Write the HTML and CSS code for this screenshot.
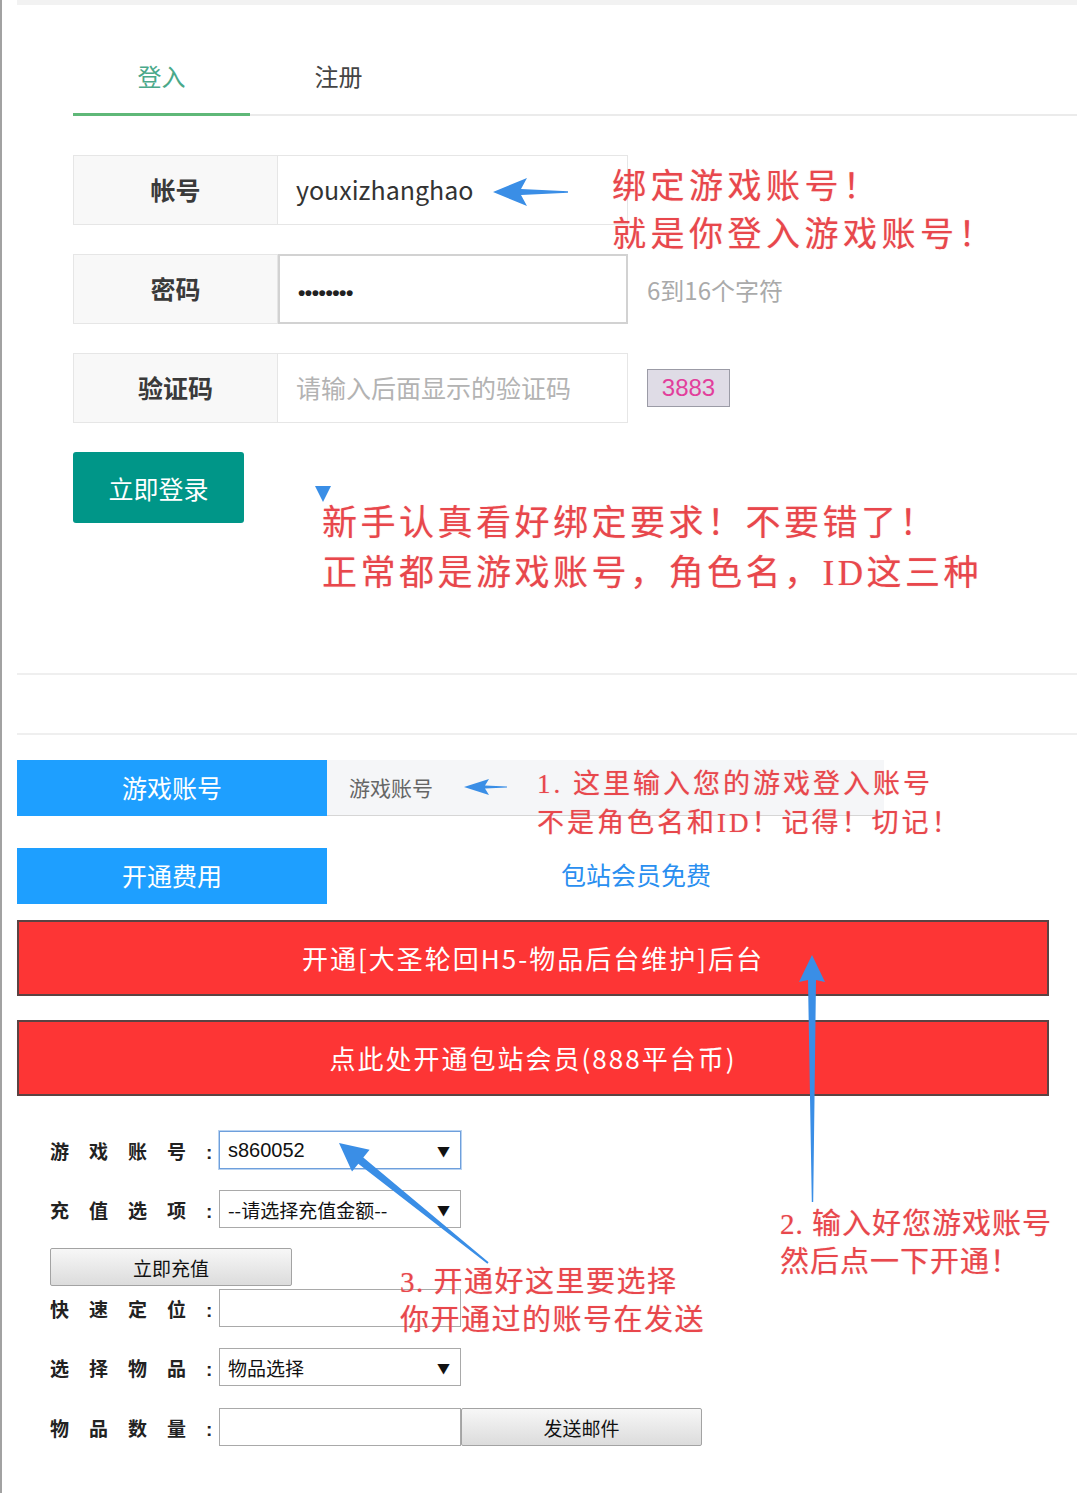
FILE: index.html
```html
<!DOCTYPE html>
<html lang="zh-CN">
<head>
    <meta charset="UTF-8">
    <meta name="viewport" content="width=device-width, initial-scale=1.0">
    <title>绑定游戏账号</title>
    <link rel="stylesheet" href="styles.css">
</head>
<body>

<div class="page">

    <!-- 登录面板 -->
    <div class="login">
        <div class="topbar"></div>
        <ul class="tabs">
            <li class="this">登入</li>
            <li>注册</li>
        </ul>

        <div class="pane">
            <div class="item">
                <label>帐号</label>
                <div class="field">youxizhanghao</div>
            </div>
            <div class="item">
                <label>密码</label>
                <div class="field focus"><span class="dots">••••••••</span></div>
                <span class="hint">6到16个字符</span>
            </div>
            <div class="item">
                <label>验证码</label>
                <div class="field placeholder">请输入后面显示的验证码</div>
                <span class="captcha">3883</span>
            </div>
        </div>

        <button class="btn-login">立即登录</button>
    </div>

    <div class="split"></div>
    <div class="split second"></div>

    <!-- 开通后台 -->
    <div class="open">
        <div class="bar-row">
            <div class="tag">游戏账号</div>
            <div class="cell account">游戏账号</div>
        </div>
        <div class="bar-row fee">
            <div class="tag">开通费用</div>
            <div class="cell free">包站会员免费</div>
        </div>

        <div class="red-bar">开通[大圣轮回H5-物品后台维护]后台</div>
        <div class="red-bar next">点此处开通包站会员(888平台币)</div>

        <div class="mail">
            <div class="frow r1">
                <span class="flabel">游戏账号<i>:</i></span>
                <div class="select focus"><span class="num">s860052</span><b>▼</b></div>
            </div>
            <div class="frow r2">
                <span class="flabel">充值选项<i>:</i></span>
                <div class="select"><span>--请选择充值金额--</span><b>▼</b></div>
            </div>
            <button class="gray-btn pay">立即充值</button>
            <div class="frow r3">
                <span class="flabel">快速定位<i>:</i></span>
                <div class="text-input"></div>
            </div>
            <div class="frow r4">
                <span class="flabel">选择物品<i>:</i></span>
                <div class="select"><span>物品选择</span><b>▼</b></div>
            </div>
            <div class="frow r5">
                <span class="flabel">物品数量<i>:</i></span>
                <div class="text-input"></div>
                <button class="gray-btn send">发送邮件</button>
            </div>
        </div>
    </div>

    <!-- 教程标注 -->
    <div class="note bind">绑定游戏账号！<br>就是你登入游戏账号！</div>
    <div class="note newbie">新手认真看好绑定要求！不要错了！<br>正常都是游戏账号，角色名，ID这三种</div>
    <div class="note step1">1. 这里输入您的游戏登入账号<br>不是角色名和ID！记得！切记！</div>
    <div class="note step2">2. 输入好您游戏账号<br>然后点一下开通！</div>
    <div class="note step3">3. 开通好这里要选择<br>你开通过的账号在发送</div>

    <svg class="arrows" width="1092" height="1493" viewBox="0 0 1092 1493">
        <polygon points="491,192 525,178 519,189 566,191.3 566,192.7 519,195 525,206"/>
        <polygon points="313,486 329,486 321,502"/>
        <polygon points="462,787 487,779 483,785.5 505,786.5 505,787.5 483,788.5 487,795"/>
        <polygon points="810,955 823,982 814,980 811.2,1202 809.8,1202 806,980 797,982"/>
        <polygon points="337,1143 367.6,1149.7 361.3,1157.5 486.6,1262.2 485.4,1263.8 356.3,1163.7 350,1171.5"/>
    </svg>

</div>

</body>
</html>
```

FILE: styles.css
```css
body {
    margin: 0;
    background: #fff;
    font-family: "Noto Sans CJK SC", sans-serif;
    color: #333;
}

.page {
    position: relative;
    width: 1092px;
    min-height: 1493px;
    box-sizing: border-box;
    border-left: 2px solid #a2a2a2;
    padding: 0 15px;
}

/* 登录面板 */
.topbar {
    height: 5px;
    background: #f2f2f2;
}

.tabs {
    list-style: none;
    margin: 0 0 0 56px;
    padding: 0;
    display: flex;
    height: 109px;
    border-bottom: 2px solid #ebebeb;
}

.tabs li {
    width: 177px;
    height: 111px;
    box-sizing: border-box;
    padding-top: 51px;
    line-height: 40px;
    text-align: center;
    font-size: 24px;
    color: #444;
}

.tabs li.this {
    color: #4aa98a;
    border-bottom: 3px solid #5fb878;
}

.pane {
    margin: 39px 0 0 56px;
}

.item {
    display: flex;
    align-items: center;
    height: 70px;
    margin-top: 29px;
}

.item:first-child {
    margin-top: 0;
}

.item label {
    width: 205px;
    height: 70px;
    box-sizing: border-box;
    line-height: 66px;
    text-align: center;
    background: #f8f8f8;
    border: 1px solid #e6e6e6;
    font-size: 25px;
    font-weight: bold;
    color: #3a3a3a;
}

.field {
    width: 350px;
    height: 70px;
    box-sizing: border-box;
    border: 1px solid #e6e6e6;
    border-left: none;
    padding-left: 18px;
    line-height: 66px;
    font-size: 25px;
    color: #333;
}

.field.focus {
    border: 2px solid #d2d2d2;
}

.dots {
    font-family: "Liberation Sans", sans-serif;
    font-size: 21px;
    font-weight: bold;
    letter-spacing: -0.5px;
    color: #222;
}

.field.placeholder {
    color: #b3b3b3;
}

.hint {
    margin-left: 19px;
    font-size: 24px;
    color: #aaa;
}

.captcha {
    margin-left: 19px;
    width: 83px;
    height: 38px;
    box-sizing: border-box;
    border: 1px solid #9b9ba6;
    background: #dfdce6;
    text-align: center;
    line-height: 36px;
    font-family: "Liberation Sans", sans-serif;
    font-size: 24px;
    color: #e23f9c;
}

.btn-login {
    display: block;
    margin: 29px 0 0 56px;
    width: 171px;
    height: 71px;
    border: none;
    border-radius: 3px;
    background: #009688;
    color: #fff;
    font-family: inherit;
    font-size: 25px;
}

.split {
    margin-top: 150px;
    height: 2px;
    background: #efefef;
}

.split.second {
    margin-top: 58px;
}

/* 开通后台 */
.open {
    margin-top: 25px;
}

.bar-row {
    display: flex;
    height: 56px;
}

.bar-row.fee {
    margin-top: 32px;
}

.tag {
    width: 310px;
    line-height: 54px;
    text-align: center;
    background: #1e9fff;
    color: #fff;
    font-size: 25px;
}

.cell.account {
    width: 557px;
    box-sizing: border-box;
    padding-left: 22px;
    line-height: 54px;
    background: #f5f6f8;
    border-bottom: 1px solid #d6d6d6;
    font-size: 21px;
    color: #666;
}

.cell.free {
    width: 618px;
    line-height: 52px;
    text-align: center;
    font-size: 25px;
    color: #2a8ff0;
}

.red-bar {
    margin-top: 16px;
    width: 1032px;
    height: 76px;
    box-sizing: border-box;
    border: 2px solid #5b4343;
    background: #fd3535;
    color: #fff;
    text-align: center;
    line-height: 72px;
    font-size: 26px;
    letter-spacing: 2px;
}

.red-bar.next {
    margin-top: 24px;
}

.mail {
    margin-top: 35px;
    padding-left: 33px;
}

.frow {
    display: flex;
    align-items: center;
    height: 38px;
}

.r2 { margin-top: 21px; }
.r3 { margin-top: 3px; }
.r4 { margin-top: 21px; }
.r5 { margin-top: 22px; }

.flabel {
    width: 169px;
    white-space: nowrap;
    font-size: 19px;
    font-weight: bold;
    letter-spacing: 20px;
    color: #222;
}

.flabel i {
    font-style: normal;
    font-family: "Liberation Sans", sans-serif;
    letter-spacing: 0;
}

.select {
    width: 242px;
    height: 38px;
    box-sizing: border-box;
    display: flex;
    align-items: center;
    justify-content: space-between;
    padding: 0 10px 0 8px;
    border: 1px solid #a9a9a9;
    background: #fff;
    font-size: 19px;
    color: #111;
}

.select.focus {
    border-color: #6e9fdc;
    box-shadow: 0 0 0 1px #b9d3f1;
}

.select .num {
    font-family: "Liberation Sans", sans-serif;
    font-size: 20px;
}

.select b {
    font-size: 13px;
    font-weight: normal;
}

.text-input {
    width: 242px;
    height: 38px;
    box-sizing: border-box;
    border: 1px solid #a9a9a9;
    background: #fff;
}

.gray-btn {
    height: 38px;
    box-sizing: border-box;
    border: 1px solid #a3a3a3;
    border-radius: 2px;
    background: linear-gradient(#f7f7f7, #dcdcdc);
    font-family: inherit;
    font-size: 19px;
    color: #111;
}

.gray-btn.pay {
    display: block;
    margin-top: 20px;
    width: 242px;
}

.gray-btn.send {
    width: 241px;
}

/* 标注 */
.note {
    position: absolute;
    font-family: "Liberation Serif", "Noto Sans CJK SC", serif;
    color: #e8474c;
    text-shadow: 0 0 1px rgba(232, 71, 76, 0.45);
    white-space: nowrap;
}

.note.bind {
    left: 610px;
    top: 163px;
    font-size: 34px;
    line-height: 48px;
    letter-spacing: 4.5px;
}

.note.newbie {
    left: 320px;
    top: 499px;
    font-size: 35px;
    line-height: 50px;
    letter-spacing: 3.5px;
}

.note.step1 {
    left: 535px;
    top: 765px;
    font-size: 27px;
    line-height: 39px;
    letter-spacing: 3px;
}

.note.step2 {
    left: 778px;
    top: 1205px;
    font-size: 29px;
    line-height: 38px;
    letter-spacing: 1px;
}

.note.step3 {
    left: 398px;
    top: 1263px;
    font-size: 29px;
    line-height: 38px;
    letter-spacing: 1.5px;
}

.arrows {
    position: absolute;
    left: 0;
    top: 0;
    pointer-events: none;
}

.arrows polygon {
    fill: #3a8ee6;
}
```
